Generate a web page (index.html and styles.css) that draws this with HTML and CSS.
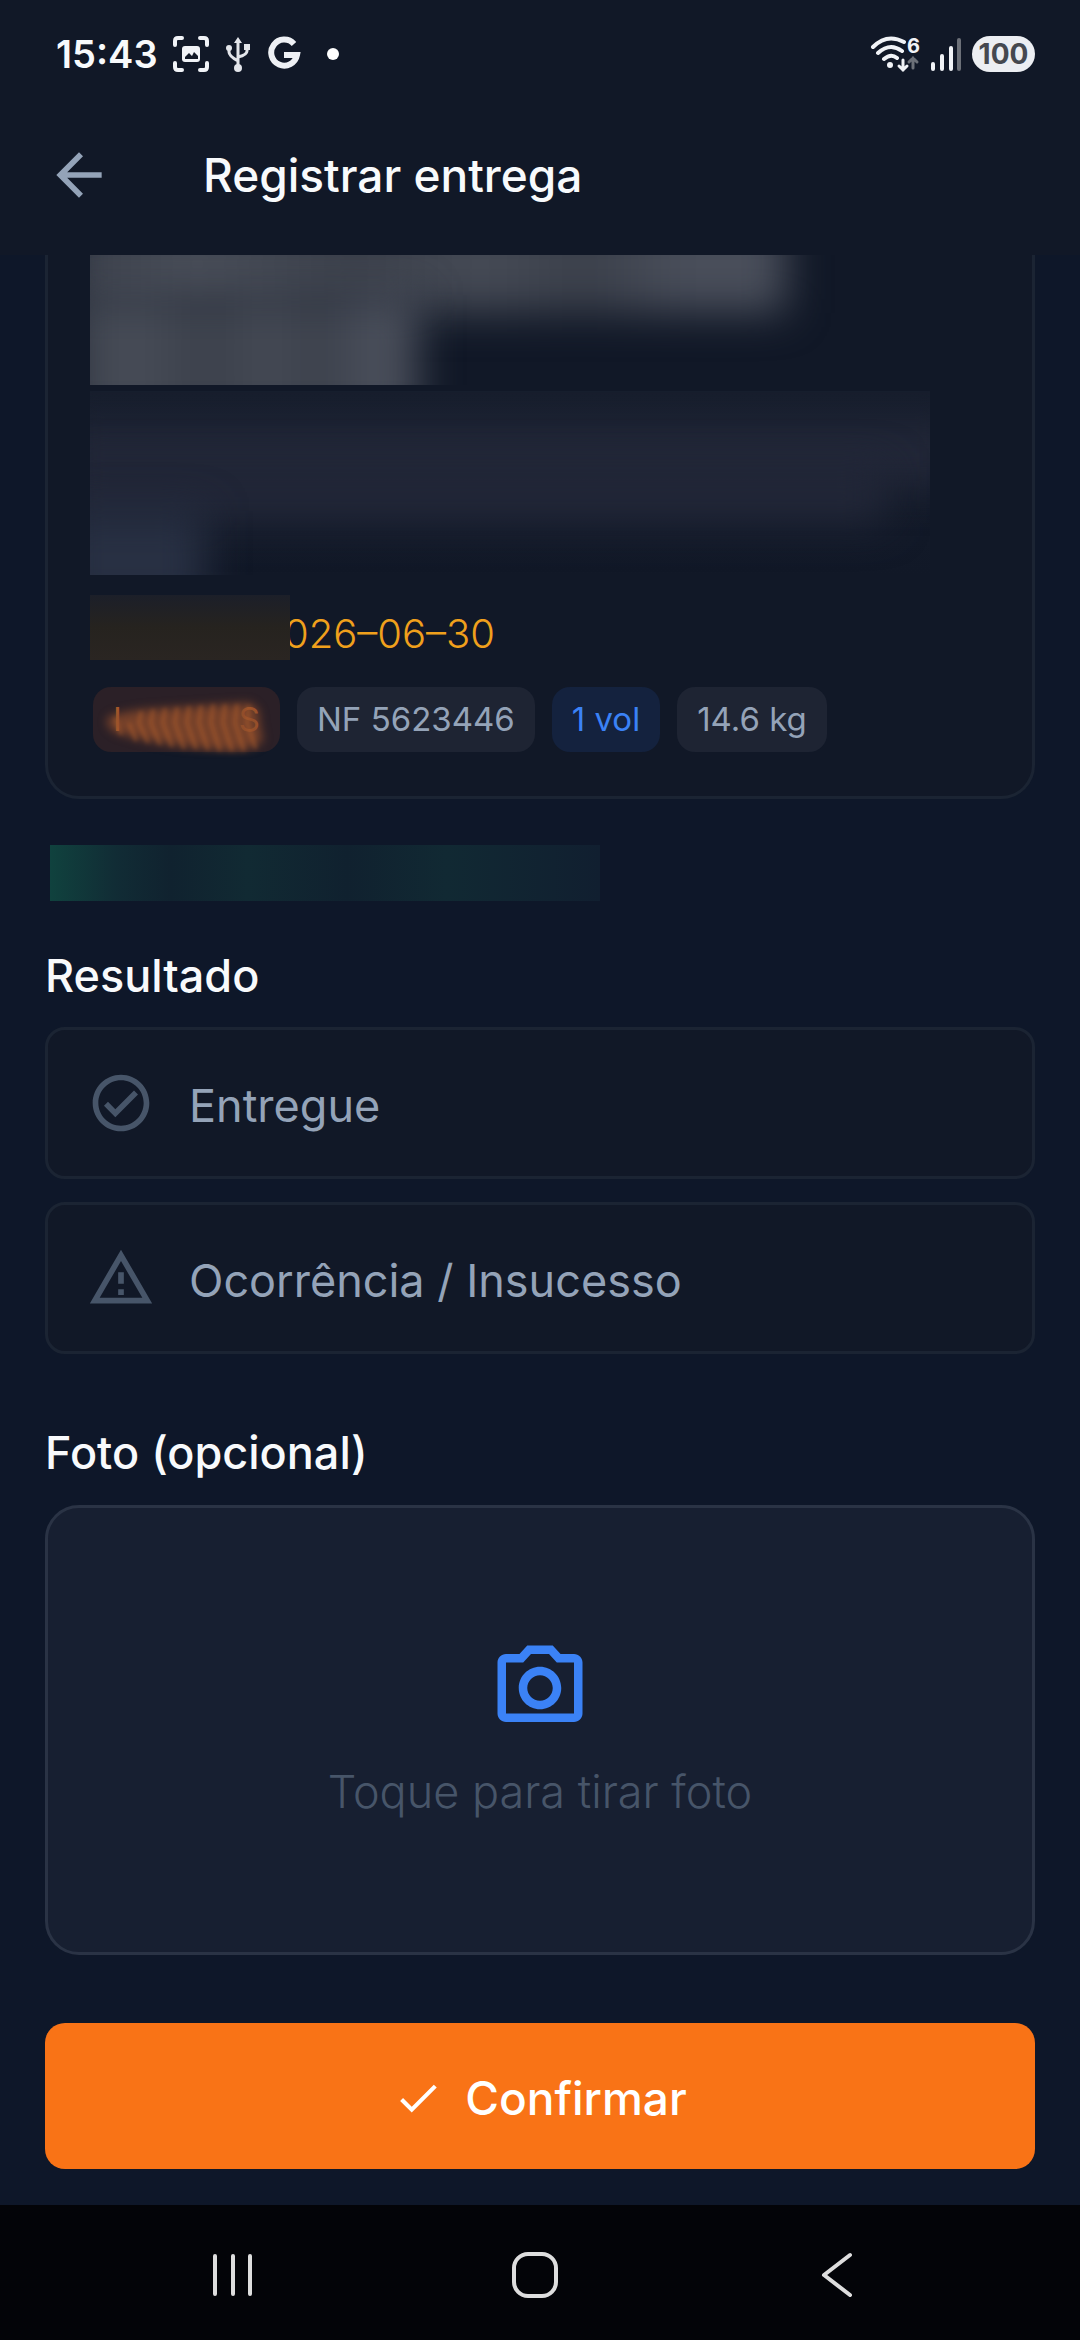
FILE: index.html
```
<!DOCTYPE html>
<html lang="pt-BR">
<head>
	<meta charset="UTF-8">
	<meta name="viewport" content="width=device-width, initial-scale=1">
	<title>Registrar entrega</title>
	<link rel="stylesheet" href="styles.css">
</head>
<body>
	<header class="top">
		<div class="status">
			<span class="clock">15:43</span>
			<svg class="status-capture" width="36" height="36" viewBox="0 0 36 36" fill="none" stroke="#f1f3f7" stroke-width="4" stroke-linecap="round" stroke-linejoin="round">
				<path d="M2 9V5q0-3 3-3h4M27 2h4q3 0 3 3v4M34 27v4q0 3-3 3h-4M9 34H5q-3 0-3-3v-4"/>
				<rect x="9" y="10" width="18" height="16" rx="3" fill="#f1f3f7" stroke="none"/>
				<path d="M12 23v-2l4-4 3 3 2-4 4 4v3z" fill="#111827" stroke="none"/>
			</svg>
			<svg class="status-usb" width="24" height="36" viewBox="0 0 24 36" fill="none" stroke="#e3e5ea" stroke-width="3">
				<path d="M12 5v26M3 13v3q0 4 9 9M21 11v4q0 4-9 6"/>
				<path d="M12 1l4 6H8zM18 8h6v6h-6z" fill="#e3e5ea" stroke="none"/>
				<circle cx="3" cy="12" r="3" fill="#e3e5ea" stroke="none"/>
				<circle cx="12" cy="32" r="4" fill="#e3e5ea" stroke="none"/>
			</svg>
			<svg class="status-g" width="34" height="36" viewBox="0 0 34 36" fill="none" stroke="#eef0f4" stroke-width="6">
				<path d="M27 8A13 13 0 1 0 30 19H17"/>
			</svg>
			<i class="dot"></i>
			<div class="signals">
				<svg width="50" height="38" viewBox="0 0 50 38" fill="none" stroke="#f1f3f7" stroke-width="4" stroke-linecap="round">
					<path d="M3 12Q17-2 34 7M8 18q12-11 24-2M14 24q7-6 13-1"/>
					<circle cx="20" cy="30" r="3" fill="#f1f3f7" stroke="none"/>
					<path d="M33 25v10M29 31l4 4 4-4" stroke-width="3"/>
					<path d="M43 33V23M39 27l4-4 4 4" stroke="#6c7078" stroke-width="3"/>
					<text x="37" y="18" class="wifi-gen">6</text>
				</svg>
				<svg width="32" height="36" viewBox="0 0 32 36" stroke="#f1f3f7" stroke-width="4" stroke-linecap="round">
					<path d="M3 28v5M12 20v13M21 12v21"/>
					<path d="M29 4v29" stroke="#6c7078"/>
				</svg>
				<span class="battery">100</span>
			</div>
		</div>
		<div class="bar">
			<button class="back" aria-label="Voltar">
				<svg width="68" height="68" viewBox="0 0 24 24" fill="#94a3b8"><path d="M20 11H7.83l5.59-5.59L12 4l-8 8 8 8 1.41-1.41L7.83 13H20v-2z"/></svg>
			</button>
			<h1>Registrar entrega</h1>
		</div>
	</header>

	<main>
		<section class="card">
			<div class="blur blur-name"><i></i><i></i></div>
			<div class="blur blur-address"><i></i><i></i><i></i></div>
			<div class="deadline">
				<div class="blur blur-label"></div>
				<span class="date">026–06–30</span>
			</div>
			<div class="chips">
				<span class="chip chip-orange">
					<b>I</b><b>S</b>
					<svg class="scribble" width="170" height="64" viewBox="0 0 170 64">
						<path class="smear" d="M6 27Q20 20 50 18L146 12Q160 14 158 30L162 50Q150 60 130 60L90 56Q40 50 24 44Q4 40 6 27z"/>
						<path class="strokes" d="M14 26l6 18M28 32l7 18M40 20l-2 12 9 20M52 18l-2 14 9 22M64 17l-2 15 9 24M76 16l-2 16 9 26M88 15l-2 17 9 26M100 14l-2 18 9 27M112 13l-2 19 9 28M124 13l-2 19 9 28M136 13l-2 19 9 28M148 14l-2 18 9 26"/>
					</svg>
				</span>
				<span class="chip">NF 5623446</span>
				<span class="chip chip-blue">1 vol</span>
				<span class="chip">14.6 kg</span>
			</div>
		</section>

		<div class="blur blur-green"></div>

		<!-- resultado -->
		<h2 id="resultado">Resultado</h2>
		<div class="options" role="radiogroup" aria-labelledby="resultado">
			<label class="option">
				<input type="radio" name="resultado" value="entregue">
				<svg width="68" height="68" viewBox="0 0 24 24" fill="#475569"><path d="M12 2C6.48 2 2 6.48 2 12s4.48 10 10 10 10-4.48 10-10S17.52 2 12 2zm0 18c-4.410 0-8-3.590-8-8s3.590-8 8-8 8 3.590 8 8-3.590 8-8 8zm4.590-12.420L10 14.170l-2.590-2.580L6 13l4 4 8-8z"/></svg>
				<span>Entregue</span>
			</label>
			<label class="option">
				<input type="radio" name="resultado" value="ocorrencia">
				<svg width="68" height="68" viewBox="0 0 24 24" fill="#475569"><path d="M12 5.990L19.530 19H4.470L12 5.990M12 2L1 21h22L12 2zm1 14h-2v2h2v-2zm0-6h-2v4h2v-4z"/></svg>
				<span>Ocorrência / Insucesso</span>
			</label>
		</div>

		<!-- foto -->
		<h2>Foto (opcional)</h2>
		<button class="photo">
			<svg width="102" height="102" viewBox="0 0 24 24" fill="#3b82f6"><path d="M14.120 4l1.830 2H20v12H4V6h4.050l1.830-2h4.240M15 2H9L7.170 4H4c-1.100 0-2 .9-2 2v12c0 1.100.9 2 2 2h16c1.100 0 2-.9 2-2V6c0-1.100-.9-2-2-2h-3.170L15 2zm-3 7c1.650 0 3 1.350 3 3s-1.350 3-3 3-3-1.350-3-3 1.350-3 3-3m0-2c-2.760 0-5 2.240-5 5s2.240 5 5 5 5-2.240 5-5-2.240-5-5-5z"/></svg>
			Toque para tirar foto
		</button>

		<button class="confirm">
			<svg width="50" height="50" viewBox="0 0 24 24" fill="#fff"><path d="M9 16.170L4.830 12l-1.420 1.410L9 19 21 7l-1.410-1.410z"/></svg>
			Confirmar
		</button>
	</main>

	<nav class="navbar">
		<button aria-label="Recentes">
			<svg width="48" height="48" viewBox="0 0 48 48" fill="none" stroke="#dedede" stroke-width="4" stroke-linecap="round"><path d="M6 5v38M24 5v38M41 5v38"/></svg>
		</button>
		<button aria-label="Início">
			<svg width="48" height="48" viewBox="0 0 48 48" fill="none" stroke="#dedede" stroke-width="4"><rect x="3" y="3" width="42" height="42" rx="14"/></svg>
		</button>
		<button aria-label="Voltar">
			<svg width="48" height="48" viewBox="0 0 48 48" fill="none" stroke="#dedede" stroke-width="4" stroke-linecap="round" stroke-linejoin="round"><path d="M37 4L11 24l26 20"/></svg>
		</button>
	</nav>
</body>
</html>
```
FILE: styles.css
```
*{
	box-sizing: border-box;
}
body{
	display: flex;
	flex-direction: column;
	min-height: 100vh;
	margin: 0;
	background-color: #0e1729;
	color: #f8fafc;
	font-family: Inter, "Liberation Sans", sans-serif;
	font-size: 46px;
}
button{
	padding: 0;
	border: 0;
	background: none;
	color: inherit;
	font: inherit;
	cursor: pointer;
}
svg{
	display: block;
	flex: none;
}
h1,h2{
	margin: 0;
	font-size: 46px;
	font-weight: 500;
	line-height: 56px;
}
h2{
	font-size: 45px;
}
/* topo */
.top{
	height: 255px;
	background-color: #111827;
}
.status{
	display: flex;
	align-items: center;
	height: 107px;
	padding: 0 45px 0 56px;
}
.clock{
	font-size: 38px;
	font-weight: 600;
}
.status-capture{
	margin-left: 15px;
}
.status-usb{
	margin-left: 17px;
}
.status-g{
	margin-left: 17px;
}
.dot{
	width: 12px;
	height: 12px;
	margin-left: 26px;
	border-radius: 50%;
	background-color: #fff;
}
.signals{
	display: flex;
	align-items: center;
	gap: 10px;
	margin-left: auto;
}
.wifi-gen{
	fill: #f1f3f7;
	stroke: none;
	font-size: 20px;
	font-weight: 700;
}
.battery{
	width: 63px;
	border-radius: 18px;
	background-color: #eceef2;
	color: #45484f;
	font-size: 28px;
	font-weight: 700;
	line-height: 36px;
	text-align: center;
}
.bar{
	display: flex;
	align-items: center;
	gap: 90px;
	height: 136px;
	padding: 0 45px;
}
/* cartão da entrega */
main{
	display: flex;
	flex-direction: column;
	padding: 0 45px 36px;
}
.card{
	padding: 0 42px 44px;
	border: 3px solid #1b2433;
	border-top: 0;
	border-radius: 0 0 34px 34px;
	background-color: #111827;
}
.blur{
	position: relative;
	overflow: hidden;
}
.blur i{
	position: absolute;
	filter: blur(20px);
}
.blur-name{
	height: 130px;
}
.blur-name i{
	top: -40px;
	left: -24px;
	width: 720px;
	height: 98px;
	background: linear-gradient(90deg,#3b404b,#484d58 18%,#3b404b 40%,#454a55 58%,#3b404b 72%,#494e5a 86%);
}
.blur-name i + i{
	top: 40px;
	width: 352px;
	height: 130px;
}
.blur-address{
	max-width: 840px;
	height: 184px;
	margin-top: 6px;
	background: linear-gradient(#161d2c,#111827);
}
.blur-address i{
	top: 30px;
	left: -30px;
	width: 900px;
	height: 66px;
	background-color: #222738;
}
.blur-address i + i{
	top: 76px;
	width: 826px;
	height: 56px;
}
.blur-address i + i + i{
	top: 120px;
	width: 144px;
	height: 100px;
	background-color: #283043;
}
.deadline{
	display: flex;
	margin-top: 20px;
}
.blur-label{
	z-index: 1;
	width: 200px;
	height: 65px;
	background: linear-gradient(#1c1f29,#26231f,#2a2522);
}
.date{
	margin-left: -6px;
	padding-top: 12px;
	color: #f0a01c;
	font-size: 40px;
	font-weight: 300;
	line-height: 54px;
}
.chips{
	display: flex;
	gap: 17px;
	margin: 26px 0 0 3px;
}
.chip{
	padding: 0 20px;
	border-radius: 18px;
	background-color: #1e2433;
	color: #94a3b8;
	font-size: 33px;
	line-height: 65px;
}
.chip-blue{
	background-color: #14223e;
	color: #3b82f6;
}
.chip-orange{
	position: relative;
	display: flex;
	justify-content: space-between;
	width: 187px;
	background-color: #2b2027;
	color: #a9592a;
}
.chip-orange b{
	font-weight: 400;
}
.scribble{
	position: absolute;
	top: 4px;
	left: 8px;
	filter: blur(2px);
}
.smear{
	fill: #8a4a2b;
	opacity: .8;
	filter: blur(4px);
}
.strokes{
	fill: none;
	stroke: #c0662c;
	stroke-width: 3;
	opacity: .5;
}
.blur-green{
	width: 550px;
	height: 56px;
	margin: 46px 0 47px 5px;
	background: linear-gradient(90deg,#10423e,#112c35 12%,#10222f 22%,#112a33 36%,#10212f 54%,#112933 72%,#111f30);
}
/* opções */
.options{
	display: flex;
	flex-direction: column;
	gap: 23px;
	margin: 23px 0 71px;
}
.option{
	position: relative;
	display: flex;
	align-items: center;
	gap: 34px;
	height: 152px;
	padding: 0 39px;
	border: 3px solid #1b2433;
	border-radius: 20px;
	background-color: #111827;
	color: #94a3b8;
	font-size: 45px;
	cursor: pointer;
}
.option span{
	padding-top: 4px;
}
.option input{
	position: absolute;
	opacity: 0;
}
.photo{
	display: flex;
	flex-direction: column;
	align-items: center;
	gap: 25px;
	height: 450px;
	margin-top: 24px;
	padding-top: 129px;
	border: 3px solid #2a3345;
	border-radius: 34px;
	background-color: #171f31;
	color: #475569;
	font-size: 45px;
	font-weight: 300;
}
.confirm{
	display: flex;
	align-items: center;
	justify-content: center;
	gap: 22px;
	height: 146px;
	margin-top: 68px;
	padding-top: 4px;
	border-radius: 20px;
	background-color: #f97316;
	color: #fff;
	font-weight: 500;
}
/* barra do sistema */
.navbar{
	display: flex;
	align-items: center;
	justify-content: center;
	gap: 254px;
	height: 135px;
	margin-top: auto;
	padding: 4px 10px 0 0;
	background-color: #030408;
}
```
